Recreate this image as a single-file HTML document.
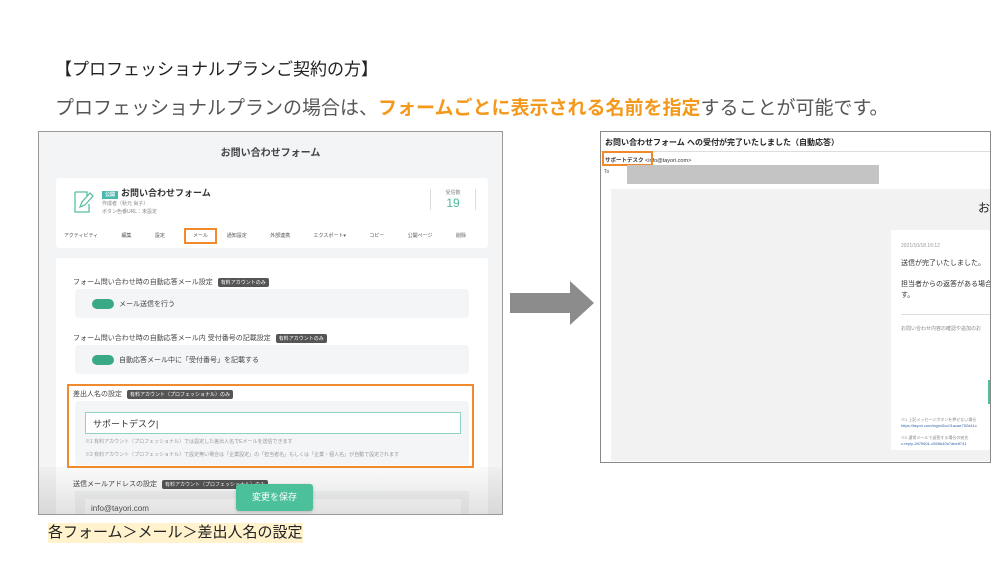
<!DOCTYPE html>
<html><head><meta charset="utf-8"><style>
*{margin:0;padding:0;box-sizing:border-box}
body{width:997px;height:561px;background:#fff;position:relative;overflow:hidden;font-family:"Liberation Sans","Noto Sans CJK JP",sans-serif;color:#333}
.a{position:absolute;white-space:nowrap}
.tag{display:inline-block;background:#555;color:#fff;font-size:5px;padding:1px 3px;border-radius:2px;vertical-align:middle;margin-left:5px}
.s{font-size:7px;color:#444}
</style></head><body>
<div class="a" style="left:55px;top:55px;font-size:17px;color:#222">【プロフェッショナルプランご契約の方】</div>
<div class="a" style="left:55px;top:93px;font-size:19px;color:#555">プロフェッショナルプランの場合は、<b style="color:#f39a1e">フォームごとに表示される名前を指定</b>することが可能です。</div>

<!-- left screenshot -->
<div class="a" style="left:38px;top:131px;width:465px;height:384px;border:1px solid #999;background:#f3f4f5;overflow:hidden">
 <div class="a" style="left:0;width:463px;top:12px;text-align:center;font-size:10px;font-weight:bold;color:#444">お問い合わせフォーム</div>
 <div class="a" style="left:17px;top:46px;width:432px;height:70px;background:#fff;border-radius:3px">
  <svg class="a" style="left:16px;top:12px" width="22" height="24"><path d="M3 2h12v4M3 2v20h14v-8M8 17l2-5 8-9 3 3-8 9z" fill="none" stroke="#5bbfa5" stroke-width="1.3"/></svg>
  <div class="a" style="left:46px;top:8px;font-size:9px;font-weight:bold"><span style="background:#4bb8b0;color:#fff;font-size:5px;padding:1px 3px;margin-right:3px">公開</span>お問い合わせフォーム</div>
  <div class="a s" style="left:46px;top:22px;font-size:5px;color:#888">作成者（秋元 尚子）</div>
  <div class="a s" style="left:46px;top:30px;font-size:5px;color:#888">ボタン色番URL：未設定</div>
  <div class="a" style="left:374px;top:11px;border-left:1px solid #ddd;border-right:1px solid #ddd;width:46px;text-align:center;font-size:5px;color:#888">受信数<br><span style="font-size:12px;color:#4bb8a0">19</span></div>
  <div class="a" style="left:8px;top:54px;font-size:5px;color:#555;word-spacing:22px">アクティビティ 編集 設定 <span style="color:#fff">メール</span> 通知設定 外部連携 エクスポート▾ コピー 公開ページ 削除</div>
  <div class="a" style="left:128px;top:50px;width:33px;height:16px;border:2px solid #f08a2c;font-size:5px;color:#555;text-align:center;line-height:12px">メール</div>
 </div>
 <div class="a" style="left:17px;top:126px;width:432px;height:260px;background:#fff">
  <div class="a s" style="left:17px;top:19px">フォーム問い合わせ時の自動応答メール設定<span class="tag">有料アカウントのみ</span></div>
  <div class="a" style="left:19px;top:31px;width:394px;height:29px;background:#f4f5f6;border-radius:4px"></div>
  <div class="a" style="left:36px;top:41px;width:22px;height:10px;background:#3aaa86;border-radius:5px"></div>
  <div class="a s" style="left:63px;top:41px">メール送信を行う</div>
  <div class="a s" style="left:17px;top:75px">フォーム問い合わせ時の自動応答メール内 受付番号の記載設定<span class="tag">有料アカウントのみ</span></div>
  <div class="a" style="left:19px;top:87px;width:394px;height:29px;background:#f4f5f6;border-radius:4px"></div>
  <div class="a" style="left:36px;top:97px;width:22px;height:10px;background:#3aaa86;border-radius:5px"></div>
  <div class="a s" style="left:63px;top:97px">自動応答メール中に「受付番号」を記載する</div>
  <div class="a" style="left:19px;top:143px;width:394px;height:64px;background:#f4f5f6;border-radius:4px"></div>
  <div class="a s" style="left:17px;top:131px">差出人名の設定<span class="tag">有料アカウント（プロフェッショナル）のみ</span></div>
  <div class="a" style="left:29px;top:154px;width:376px;height:22px;background:#fff;border:1px solid #8fd3c4;font-size:9px;padding:4px 7px">サポートデスク|</div>
  <div class="a" style="left:29px;top:180px;font-size:5px;color:#999">※1 有料アカウント（プロフェッショナル）では設定した差出人名でEメールを送信できます</div>
  <div class="a" style="left:29px;top:193px;font-size:5px;color:#999">※2 有料アカウント（プロフェッショナル）で設定無い場合は「企業設定」の「担当者名」もしくは「企業・個人名」が自動で設定されます</div>
  <div class="a s" style="left:17px;top:221px">送信メールアドレスの設定<span class="tag">有料アカウント（プロフェッショナル）のみ</span></div>
  <div class="a" style="left:19px;top:233px;width:394px;height:40px;background:#f4f5f6"></div>
  <div class="a" style="left:29px;top:241px;width:376px;height:20px;background:#fff;font-size:8px;padding:5px 6px;color:#555">info@tayori.com</div>
 </div>
 <div class="a" style="left:0;top:335px;width:465px;height:50px;background:linear-gradient(rgba(0,0,0,0.02),rgba(0,0,0,0.12))"></div>
 <div class="a" style="left:28px;top:252px;width:407px;height:84px;border:2.5px solid #f08a2c"></div>
 <div class="a" style="left:197px;top:352px;width:77px;height:27px;background:#4cbf9b;border-radius:3px;color:#fff;font-size:9px;text-align:center;line-height:27px;box-shadow:0 1px 3px rgba(0,0,0,.2)">変更を保存</div>
</div>
<div class="a" style="left:48px;top:523px;font-size:15px;background:#fff2cc;color:#222;line-height:20px">各フォーム＞メール＞差出人名の設定</div>

<!-- arrow -->
<svg class="a" style="left:510px;top:281px" width="84" height="44"><path d="M0 12h60V0l24 22-24 22V32H0z" fill="#8c8c8c"/></svg>

<!-- right screenshot -->
<div class="a" style="left:600px;top:131px;width:391px;height:332px;border:1px solid #888;background:#fff;overflow:hidden">
 <div class="a" style="left:4px;top:5px;font-size:8px;font-weight:bold;color:#222">お問い合わせフォーム への受付が完了いたしました（自動応答）</div>
 <div class="a" style="left:0;top:19px;width:391px;border-top:1px solid #ddd"></div>
 <div class="a" style="left:4px;top:24px;font-size:5.5px;color:#333"><b>サポートデスク</b> &lt;info@tayori.com&gt;</div>
 <div class="a" style="left:1px;top:19px;width:51px;height:15px;border:2.5px solid #f08a2c"></div>
 <div class="a" style="left:3px;top:37px;font-size:5px;color:#555">To</div>
 <div class="a" style="left:26px;top:33px;width:252px;height:19px;background:#c4c4c4"></div>
 <div class="a" style="left:10px;top:57px;width:381px;height:272px;background:#f2f2f2"></div>
 <div class="a" style="left:377px;top:67px;font-size:12px;color:#222">お</div>
 <div class="a" style="left:290px;top:98px;width:101px;height:220px;background:#fff"></div>
 <div class="a" style="left:300px;top:111px;font-size:5px;color:#999">2021/10/18 16:12</div>
 <div class="a" style="left:300px;top:126px;font-size:7px;color:#333">送信が完了いたしました。</div>
 <div class="a" style="left:300px;top:147px;font-size:7px;color:#333;line-height:11px">担当者からの返答がある場合<br>す。</div>
 <div class="a" style="left:300px;top:182px;width:91px;border-top:1px solid #ddd"></div>
 <div class="a" style="left:300px;top:193px;font-size:5px;color:#888">お問い合わせ内容の確認や追加のお</div>
 <div class="a" style="left:387px;top:248px;width:4px;height:24px;background:#4cbf9b"></div>
 <div class="a" style="left:300px;top:285px;font-size:4px;color:#888;line-height:6px">※1 上記メッセージボタンを押せない場合<br><span style="color:#3366aa">https://tayori.com/login/5cc01acae752d41c</span><br><br>※2 通常メールで返答する場合の宛先<br><span style="color:#3366aa">c-reply-2875601-c555b40b7abe8741</span></div>
</div>
</body></html>
